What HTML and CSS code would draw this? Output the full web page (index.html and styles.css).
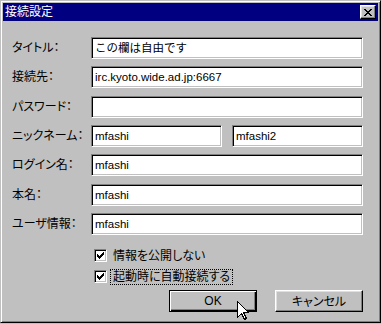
FILE: index.html
```html
<!DOCTYPE html>
<html lang="ja">
<head>
<meta charset="utf-8">
<title>接続設定</title>
<link rel="stylesheet" href="styles.css">
</head>
<body>
<div class="window">
  <div class="titlebar">
    <span class="title">接続設定</span>
    <div class="close">
      <svg width="8" height="7" viewBox="0 0 8 7" shape-rendering="crispEdges">
        <path d="M0 0h2v1h-2zM6 0h2v1h-2zM1 1h2v1h-2zM5 1h2v1h-2zM2 2h4v1h-4zM3 3h2v1h-2zM2 4h4v1h-4zM1 5h2v1h-2zM5 5h2v1h-2zM0 6h2v1h-2zM6 6h2v1h-2z" fill="#000"/>
      </svg>
    </div>
  </div>
  <div class="content">
    <div class="form">
      <div class="lbl">タイトル：</div>
      <div class="field">この欄は自由です</div>
      <div class="lbl">接続先：</div>
      <div class="field">irc.kyoto.wide.ad.jp:6667</div>
      <div class="lbl">パスワード：</div>
      <div class="field"></div>
      <div class="lbl">ニックネーム：</div>
      <div class="pair">
        <div class="field">mfashi</div>
        <div class="field">mfashi2</div>
      </div>
      <div class="lbl">ログイン名：</div>
      <div class="field">mfashi</div>
      <div class="lbl">本名：</div>
      <div class="field">mfashi</div>
      <div class="lbl">ユーザ情報：</div>
      <div class="field">mfashi</div>
    </div>
    <div class="checks">
      <div class="check">
        <span class="box"><svg width="7" height="7" viewBox="0 0 7 7" shape-rendering="crispEdges"><path d="M6 0h1v1h-1zM5 1h2v1h-2zM0 2h1v1h-1zM4 2h3v1h-3zM0 3h2v1h-2zM3 3h3v1h-3zM0 4h5v1h-5zM1 5h3v1h-3zM2 6h1v1h-1z" fill="#000"/></svg></span>
        <span class="ctext">情報を公開しない</span>
      </div>
      <div class="check">
        <span class="box"><svg width="7" height="7" viewBox="0 0 7 7" shape-rendering="crispEdges"><path d="M6 0h1v1h-1zM5 1h2v1h-2zM0 2h1v1h-1zM4 2h3v1h-3zM0 3h2v1h-2zM3 3h3v1h-3zM0 4h5v1h-5zM1 5h3v1h-3zM2 6h1v1h-1z" fill="#000"/></svg></span>
        <span class="ctext focus">起動時に自動接続する</span>
      </div>
    </div>
    <div class="buttons">
      <div class="btn default">OK</div>
      <div class="btn">キャンセル</div>
    </div>
  </div>
  <svg class="cursor" width="12" height="19" viewBox="0 0 12 19" shape-rendering="crispEdges">
    <path d="M0.5 0.5 L0.5 16.5 L4.5 12.5 L7.5 18.5 L9.5 17.5 L6.5 11.5 L11.5 11.5 Z" fill="#fff" stroke="#000" stroke-width="1"/>
  </svg>
</div>
</body>
</html>
```

FILE: styles.css
```css
* { box-sizing: border-box; }
html, body { margin: 0; padding: 0; }
body {
  width: 381px;
  height: 324px;
  background: #c0c0c0;
  font-family: "Liberation Sans", "Noto Sans CJK JP", sans-serif;
  font-size: 12px;
  color: #000;
  overflow: hidden;
}
.window {
  position: relative;
  width: 381px;
  height: 323px;
  background: #c0c0c0;
  border-top: 1px solid #c0c0c0;
  border-left: 1px solid #c0c0c0;
  border-right: 1px solid #000;
  border-bottom: 1px solid #000;
  box-shadow: inset 1px 1px 0 #fff, inset -1px -1px 0 #808080;
  padding: 2px;
}
.titlebar {
  height: 18px;
  background: #000080;
  display: flex;
  align-items: center;
  justify-content: space-between;
  padding: 0 2px 0 2px;
}
.title {
  color: #fff;
  font-size: 12px;
  line-height: 18px;
}
.close {
  width: 16px;
  height: 14px;
  background: #c0c0c0;
  border-top: 1px solid #fff;
  border-left: 1px solid #fff;
  border-right: 1px solid #000;
  border-bottom: 1px solid #000;
  box-shadow: inset -1px -1px 0 #808080, inset 1px 1px 0 #dfdfdf;
  display: flex;
  align-items: center;
  justify-content: center;
  padding-right: 1px;
}
.close svg { display: block; }
.content {
  padding: 16px 15px 0 9px;
}
.form {
  display: grid;
  grid-template-columns: 79px 1fr;
  grid-auto-rows: 22px;
  row-gap: 7.33px;
  align-items: center;
}
.lbl {
  font-size: 12px;
  font-feature-settings: "palt";
  line-height: 22px;
  white-space: nowrap;
}
.field {
  height: 22px;
  background: #fff;
  border-top: 1px solid #808080;
  border-left: 1px solid #808080;
  border-right: 1px solid #fff;
  border-bottom: 1px solid #fff;
  box-shadow: inset 1px 1px 0 #000, inset -1px -1px 0 #c0c0c0;
  padding: 0 3px;
  font-size: 11.5px;
  line-height: 20px;
  white-space: nowrap;
  overflow: hidden;
}
.pair {
  display: grid;
  grid-template-columns: 1fr 1fr;
  column-gap: 10px;
}
.checks {
  margin-top: 13px;
  margin-left: 82px;
  display: flex;
  flex-direction: column;
  row-gap: 6px;
}
.check {
  height: 15px;
  display: flex;
  align-items: flex-start;
}
.box {
  width: 13px;
  height: 13px;
  margin-top: 1px;
  background: #fff;
  border-top: 1px solid #808080;
  border-left: 1px solid #808080;
  border-right: 1px solid #fff;
  border-bottom: 1px solid #fff;
  box-shadow: inset 1px 1px 0 #000, inset -1px -1px 0 #c0c0c0;
  display: flex;
  align-items: center;
  justify-content: center;
}
.box svg { display: block; }
.ctext {
  margin-left: 3px;
  padding: 0 2px;
  height: 16px;
  line-height: 15px;
  font-size: 12px;
  font-feature-settings: "palt";
  border: 1px dotted transparent;
  white-space: nowrap;
}
.ctext.focus {
  border-color: #000;
}
.buttons {
  margin-top: 6px;
  display: flex;
  justify-content: flex-end;
  column-gap: 18px;
}
.btn {
  width: 88px;
  height: 22px;
  background: #c0c0c0;
  border-top: 1px solid #fff;
  border-left: 1px solid #fff;
  border-right: 1px solid #000;
  border-bottom: 1px solid #000;
  box-shadow: inset -1px -1px 0 #808080, inset 1px 1px 0 #dfdfdf;
  display: flex;
  align-items: center;
  justify-content: center;
  font-size: 12px;
  font-feature-settings: "palt";
}
.btn.default {
  border: 1px solid #000;
  box-shadow: inset 1px 1px 0 #fff, inset -1px -1px 0 #000, inset -2px -2px 0 #808080;
}
.cursor {
  position: absolute;
  left: 236px;
  top: 300px;
}
```
